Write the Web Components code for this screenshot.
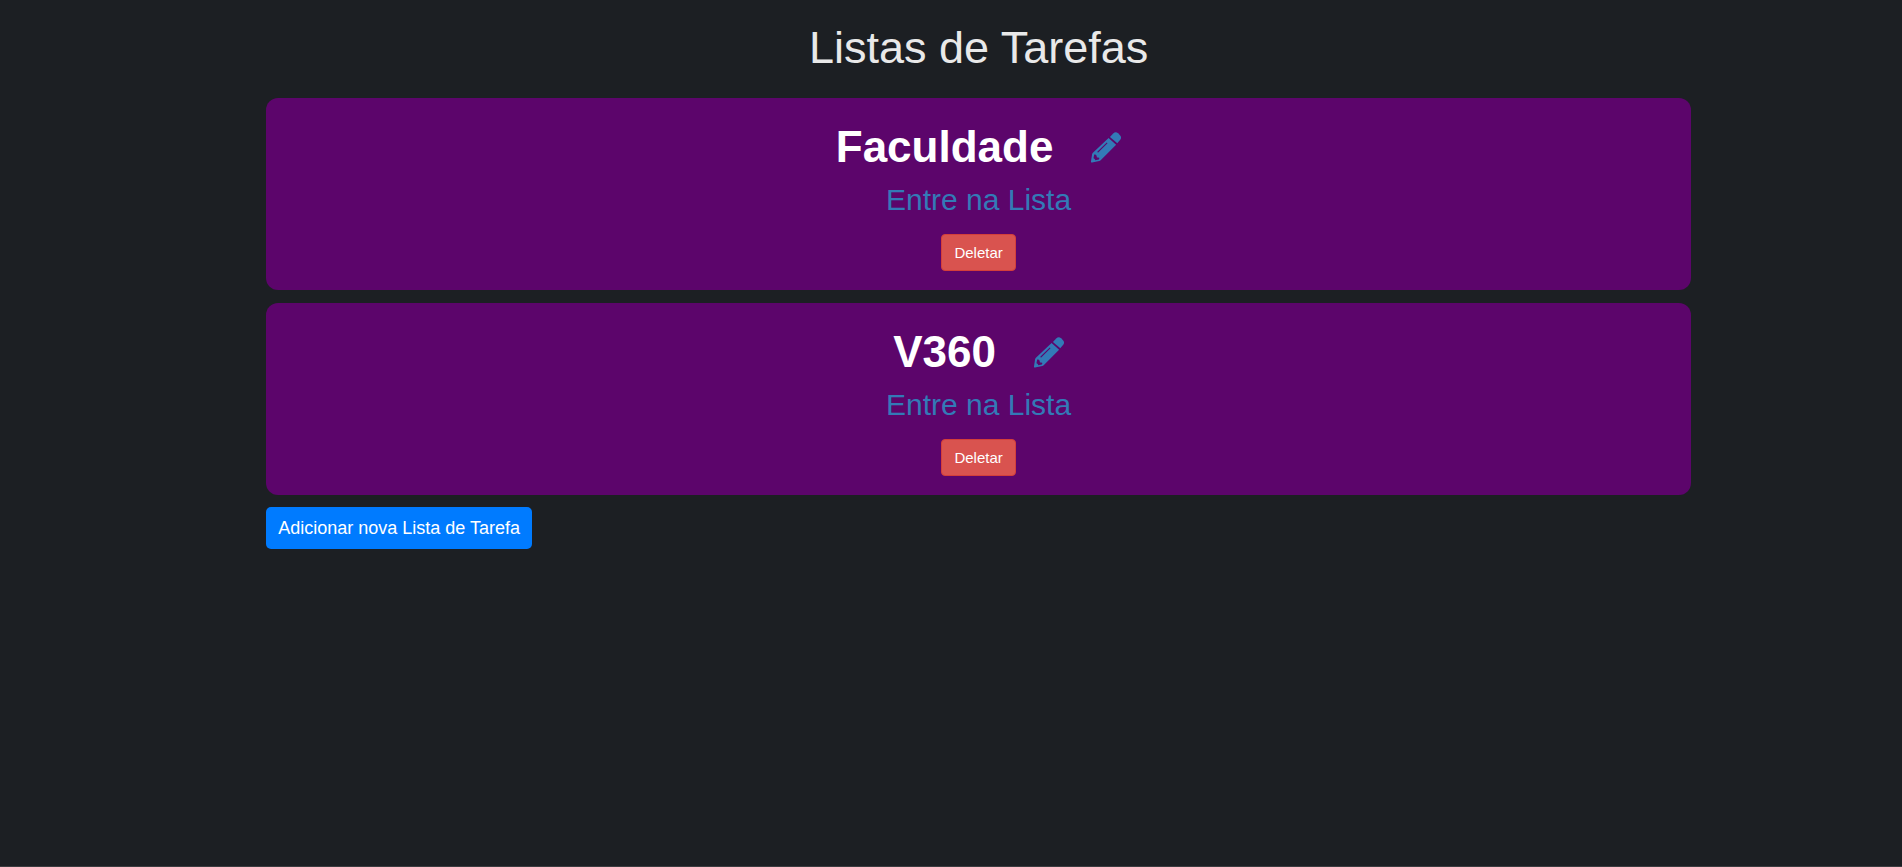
<!DOCTYPE html>
<html lang="pt-BR">
<head>
<meta charset="utf-8">
<meta name="viewport" content="width=device-width, initial-scale=1">
<title>Listas de Tarefas</title>
<style>
  body {
    margin: 0;
    background: #1c1f23;
    color: #e9e9e9;
    font-family: "Liberation Sans", Arial, sans-serif;
  }
</style>
</head>
<body>
<task-lists-page>
  <span slot="title">Listas de Tarefas</span>
  <task-list-card name="Faculdade"></task-list-card>
  <task-list-card name="V360"></task-list-card>
  <add-list-button slot="actions">Adicionar nova Lista de Tarefa</add-list-button>
</task-lists-page>

<template id="page-template">
  <style>
    :host {
      display: block;
      box-sizing: border-box;
      min-height: 100vh;
      padding: 23px 11.1% 23px 14%;
      border-bottom: 1px solid #3c3c40;
    }
    h1 {
      margin: 0 0 25px;
      font-size: 45px;
      line-height: 50px;
      font-weight: 400;
      text-align: center;
    }
    main { display: flex; flex-direction: column; gap: 13px; }
    footer { display: flex; margin-top: 12px; }
  </style>
  <h1><slot name="title"></slot></h1>
  <main><slot></slot></main>
  <footer><slot name="actions"></slot></footer>
</template>

<template id="card-template">
  <style>
    :host { display: block; }
    article {
      display: flex;
      flex-direction: column;
      align-items: center;
      padding: 24px 16px 19px;
      border-radius: 12px;
      background: #5c056b;
      color: #fff;
    }
    header { display: flex; align-items: center; gap: 38px; }
    h2 { margin: 0; font-size: 44px; line-height: 50px; font-weight: 700; }
    a { color: #337ab7; text-decoration: none; }
    .enter { margin: 11px 0 17px; font-size: 30px; line-height: 34px; }
    .enter:hover { text-decoration: underline; }
    button {
      padding: 8px 12px;
      border: 1px solid #d43f3a;
      border-radius: 4px;
      background: #d9534f;
      color: #fff;
      font: 15px/19px "Liberation Sans", Arial, sans-serif;
      cursor: pointer;
    }
  </style>
  <article>
    <header>
      <h2></h2>
      <a class="edit" href="#editar"><pencil-icon></pencil-icon></a>
    </header>
    <a class="enter" href="#lista">Entre na Lista</a>
    <button type="button">Deletar</button>
  </article>
</template>

<template id="pencil-template">
  <style>
    :host { display: block; }
    svg { display: block; width: 30px; height: 31px; fill: currentColor; }
  </style>
  <svg viewBox="0 0 30 31" aria-hidden="true">
    <path d="M18.9 4.9 22.2 1.4Q24.7-.9 27.1 1.3L29.2 3.5Q31 5.6 29.2 7.8L26.3 11.3Z"/>
    <path fill-rule="evenodd" d="M17.6 5.9 25.1 12.8 9.9 28.1Q9 28.9 8.2 29L1.1 30.4Q-.2 30.6 0 29.3L1.1 22.2Q1.3 21.4 1.9 20.8ZM15.8 10.6 6.5 19.6Q6.1 20.6 7.2 20.5L16.5 11.3ZM3.1 22.9 2.5 26.3Q4.1 26.6 4.3 28.2L7.9 27.4 8.4 26.1Q7.7 25 6.2 25.6 5.5 25.1 5.8 24.3 5.5 22.5 3.7 22.2Z"/>
  </svg>
</template>

<template id="add-template">
  <style>
    :host { display: block; }
    button {
      padding: 11px 12px;
      border: 0;
      border-radius: 5px;
      background: #007bff;
      color: #fff;
      font: 18px/20px "Liberation Sans", Arial, sans-serif;
      cursor: pointer;
    }
  </style>
  <button type="button"><slot></slot></button>
</template>

<script>
  class TemplateElement extends HTMLElement {
    constructor() {
      super();
      const template = document.getElementById(this.constructor.templateId);
      this.attachShadow({ mode: "open" }).append(template.content.cloneNode(true));
    }
  }

  class PencilIcon extends TemplateElement {
    static templateId = "pencil-template";
  }

  class TaskListCard extends TemplateElement {
    static templateId = "card-template";
    static observedAttributes = ["name"];
    attributeChangedCallback(attribute, previous, value) {
      this.shadowRoot.querySelector("h2").textContent = value;
      this.shadowRoot.querySelector(".edit").setAttribute("aria-label", "Editar " + value);
    }
  }

  class AddListButton extends TemplateElement {
    static templateId = "add-template";
  }

  class TaskListsPage extends TemplateElement {
    static templateId = "page-template";
  }

  customElements.define("pencil-icon", PencilIcon);
  customElements.define("task-list-card", TaskListCard);
  customElements.define("add-list-button", AddListButton);
  customElements.define("task-lists-page", TaskListsPage);
</script>
</body>
</html>
